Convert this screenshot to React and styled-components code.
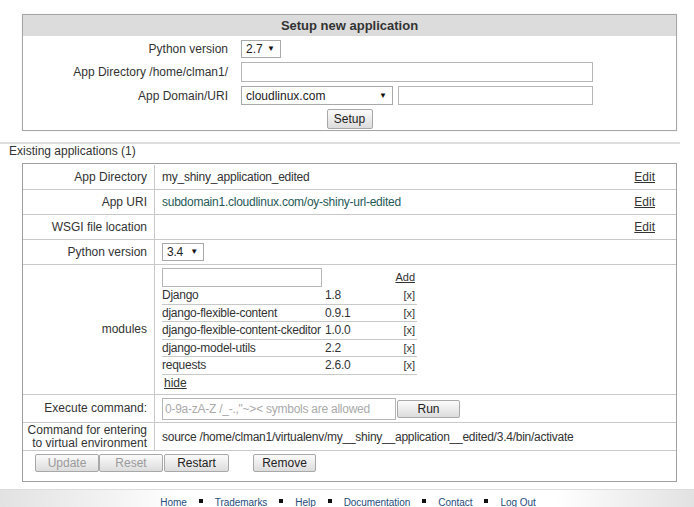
import React from "react";
import styled, { createGlobalStyle } from "styled-components";

const Global = createGlobalStyle`
  html, body { margin: 0; padding: 0; background: #fff; }
  body {
    font-family: "Liberation Sans", Arial, sans-serif;
    font-size: 12px;
    color: #333;
  }
  * { box-sizing: border-box; }
`;

const Page = styled.div`
  width: 694px;
  height: 507px;
  overflow: hidden;
  padding-top: 14px;
`;

const SetupPanel = styled.section`
  margin: 0 17px 0 22px;
  border: 1px solid #a6a6a6;
  padding: 0 0 1px;
  box-shadow: 0 0 1px rgba(0, 0, 0, 0.15);
`;

const PanelHeader = styled.div`
  height: 21px;
  line-height: 21px;
  background: #dcdcdc;
  text-align: center;
  font-weight: bold;
  font-size: 13px;
  color: #333;
`;

const SetupForm = styled.div`
  display: grid;
  grid-template-columns: 205px 1fr;
  column-gap: 13px;
  row-gap: 4px;
  padding-top: 4px;
`;

const FormLabel = styled.div`
  text-align: right;
  align-self: center;
  line-height: 14px;
`;

const FormControls = styled.div`
  display: flex;
  gap: ${(p) => p.$gap ?? 5}px;
  align-items: center;
`;

const SelectBox = styled.div`
  display: inline-flex;
  align-items: center;
  justify-content: space-between;
  width: ${(p) => p.$w}px;
  height: ${(p) => p.$h || 18}px;
  border: 1px solid #a9a9a9;
  background: #fff;
  padding: 0 5px 0 4px;
  color: #222;
  line-height: 14px;
  span {
    font-size: 8px;
    color: #111;
  }
`;

const TextInput = styled.div`
  width: ${(p) => p.$w}px;
  height: ${(p) => p.$h || 20}px;
  border: 1px solid #b5b5b5;
  background: #fff;
  color: #aaa;
  padding: 0 3px 0 2px;
  line-height: ${(p) => (p.$h || 20) - 2}px;
  white-space: nowrap;
  overflow: hidden;
`;

const SetupRow = styled.div`
  grid-column: 1 / span 2;
  display: flex;
  justify-content: center;
`;

const Button = styled.button`
  font-family: "Liberation Sans", Arial, sans-serif;
  font-size: 12px;
  letter-spacing: 0;
  width: ${(p) => p.$w}px;
  height: ${(p) => p.$h || 18}px;
  padding: 0;
  border: 1px solid #a8a8a8;
  border-radius: 2px;
  background: linear-gradient(#fbfbfb, #dcdcdc);
  color: ${(p) => (p.disabled ? "#9a9a9a" : "#222")};
  cursor: default;
`;

const Divider = styled.div`
  margin-top: 11px;
  width: 680px;
  height: 2px;
  background: #dedede;
`;

const SectionTitle = styled.div`
  padding-left: 9px;
  line-height: 14px;
  color: #333;
`;

const AppTable = styled.div`
  margin: 5px 17px 0 22px;
  border: 1px solid #a0a0a0;
  display: grid;
  grid-template-columns: 132px 1fr;
  padding-top: 1px;
  letter-spacing: -0.25px;
`;

const LabelCell = styled.div`
  height: ${(p) => p.$h}px;
  border-bottom: 1px solid #c8c8c8;
  border-right: 1px solid #c8c8c8;
  text-align: right;
  padding-right: 7px;
  display: flex;
  align-items: center;
  justify-content: flex-end;
  line-height: 13px;
  letter-spacing: 0;
`;

const ValueCell = styled.div`
  height: ${(p) => p.$h}px;
  border-bottom: 1px solid #c8c8c8;
  padding: ${(p) => p.$pad || "0 21px 0 7px"};
  display: flex;
  align-items: ${(p) => p.$align || "center"};
  justify-content: space-between;
  color: #333;
  white-space: nowrap;
`;

const ValueLink = styled.span`
  color: #1f5a58;
`;

const EditLink = styled.a`
  color: #333;
  text-decoration: underline;
  letter-spacing: 0;
`;

const ModulesBox = styled.div`
  display: grid;
  grid-template-columns: 163px 64px 28px;
  align-content: start;
  padding-top: 3px;
`;

const ModRow = styled.div`
  display: contents;
`;

const ModCell = styled.div`
  height: ${(p) => p.$h || 17.5}px;
  border-bottom: ${(p) => (p.$line ? "1px solid #c8c8c8" : "none")};
  text-align: ${(p) => (p.$right ? "right" : "left")};
  padding-right: ${(p) => (p.$right ? "2px" : "0")};
  padding-left: ${(p) => p.$indent || 0}px;
  line-height: ${(p) => (p.$h || 17.5) - 1}px;
  color: #333;
  white-space: nowrap;
`;

const SmallLink = styled.a`
  color: #333;
  text-decoration: ${(p) => (p.$plain ? "none" : "underline")};
  font-size: ${(p) => (p.$small ? 11 : 12)}px;
  letter-spacing: 0;
`;

const ButtonsRow = styled.div`
  grid-column: 1 / span 2;
  height: 30px;
  display: flex;
  align-items: flex-start;
  padding: 3px 0 0 12px;
`;

const Gap = styled.div`
  width: ${(p) => p.$w}px;
`;

const Footer = styled.footer`
  margin-top: 7px;
  border-top: 1px solid #dcdcdc;
  height: 20px;
  background: linear-gradient(
    to right,
    #e2e2e2 0%,
    #f3f3f3 16%,
    #fff 26%,
    #fff 80%,
    #f3f3f3 88%,
    #e2e2e2 100%
  );
  display: flex;
  justify-content: center;
  align-items: flex-start;
  padding-top: 6px;
  padding-left: 2px;
  font-size: 10px;
  line-height: 13px;
  letter-spacing: -0.05px;
`;

const FooterLink = styled.a`
  color: #1e4d7c;
  text-decoration: none;
`;

const Bullet = styled.span`
  display: inline-block;
  width: 4px;
  height: 4px;
  background: #111;
  margin: 3px 12px 0;
`;

const modules = [
  ["Django", "1.8"],
  ["django-flexible-content", "0.9.1"],
  ["django-flexible-content-ckeditor", "1.0.0"],
  ["django-model-utils", "2.2"],
  ["requests", "2.6.0"],
];

const footerLinks = ["Home", "Trademarks", "Help", "Documentation", "Contact", "Log Out"];

export default function App() {
  return (
    <Page>
      <Global />
      <SetupPanel>
        <PanelHeader>Setup new application</PanelHeader>
        <SetupForm>
          <FormLabel>Python version</FormLabel>
          <FormControls>
            <SelectBox $w={40}>
              2.7 <span>▼</span>
            </SelectBox>
          </FormControls>
          <FormLabel>App Directory /home/clman1/</FormLabel>
          <FormControls>
            <TextInput $w={352} />
          </FormControls>
          <FormLabel>App Domain/URI</FormLabel>
          <FormControls>
            <SelectBox $w={152} $h={19}>
              cloudlinux.com <span>▼</span>
            </SelectBox>
            <TextInput $w={195} $h={19} />
          </FormControls>
          <SetupRow>
            <Button $w={46} $h={20}>Setup</Button>
          </SetupRow>
        </SetupForm>
      </SetupPanel>

      <Divider />
      <SectionTitle>Existing applications (1)</SectionTitle>

      <AppTable>
        <LabelCell $h={25}>App Directory</LabelCell>
        <ValueCell $h={25}>
          <span>my_shiny_application_edited</span>
          <EditLink>Edit</EditLink>
        </ValueCell>

        <LabelCell $h={25}>App URI</LabelCell>
        <ValueCell $h={25}>
          <ValueLink>subdomain1.cloudlinux.com/oy-shiny-url-edited</ValueLink>
          <EditLink>Edit</EditLink>
        </ValueCell>

        <LabelCell $h={25}>WSGI file location</LabelCell>
        <ValueCell $h={25}>
          <span />
          <EditLink>Edit</EditLink>
        </ValueCell>

        <LabelCell $h={25}>Python version</LabelCell>
        <ValueCell $h={25}>
          <SelectBox $w={42}>
            3.4 <span>▼</span>
          </SelectBox>
        </ValueCell>

        <LabelCell $h={130}>modules</LabelCell>
        <ValueCell $h={130} $align="flex-start" $pad="0 0 0 7px">
          <ModulesBox>
            <ModCell $h={19}>
              <TextInput $w={160} $h={19} />
            </ModCell>
            <ModCell $h={19} />
            <ModCell $h={19} $right>
              <SmallLink $small>Add</SmallLink>
            </ModCell>
            {modules.map(([name, ver]) => (
              <ModRow key={name}>
                <ModCell $line>{name}</ModCell>
                <ModCell $line>{ver}</ModCell>
                <ModCell $line $right>
                  <SmallLink $small $plain>[x]</SmallLink>
                </ModCell>
              </ModRow>
            ))}
            <ModCell $h={18} $indent={2}>
              <SmallLink>hide</SmallLink>
            </ModCell>
          </ModulesBox>
        </ValueCell>

        <LabelCell $h={28}>Execute command:</LabelCell>
        <ValueCell $h={28} $pad="0 0 0 7px">
          <FormControls $gap={1}>
            <TextInput $w={234} $h={22}>
              0-9a-zA-Z /_-.,"~&gt;&lt; symbols are allowed
            </TextInput>
            <Button $w={63}>Run</Button>
          </FormControls>
          <span />
        </ValueCell>

        <LabelCell $h={28}>
          Command for entering
          <br />
          to virtual environment
        </LabelCell>
        <ValueCell $h={28}>
          <span>source /home/clman1/virtualenv/my__shiny__application__edited/3.4/bin/activate</span>
        </ValueCell>

        <ButtonsRow>
          <Button $w={64} disabled>Update</Button>
          <Button $w={64} disabled>Reset</Button>
          <Gap $w={1} />
          <Button $w={65}>Restart</Button>
          <Gap $w={24} />
          <Button $w={63}>Remove</Button>
        </ButtonsRow>
      </AppTable>

      <Footer>
        {footerLinks.map((l, i) => (
          <React.Fragment key={l}>
            {i > 0 && <Bullet />}
            <FooterLink>{l}</FooterLink>
          </React.Fragment>
        ))}
      </Footer>
    </Page>
  );
}
